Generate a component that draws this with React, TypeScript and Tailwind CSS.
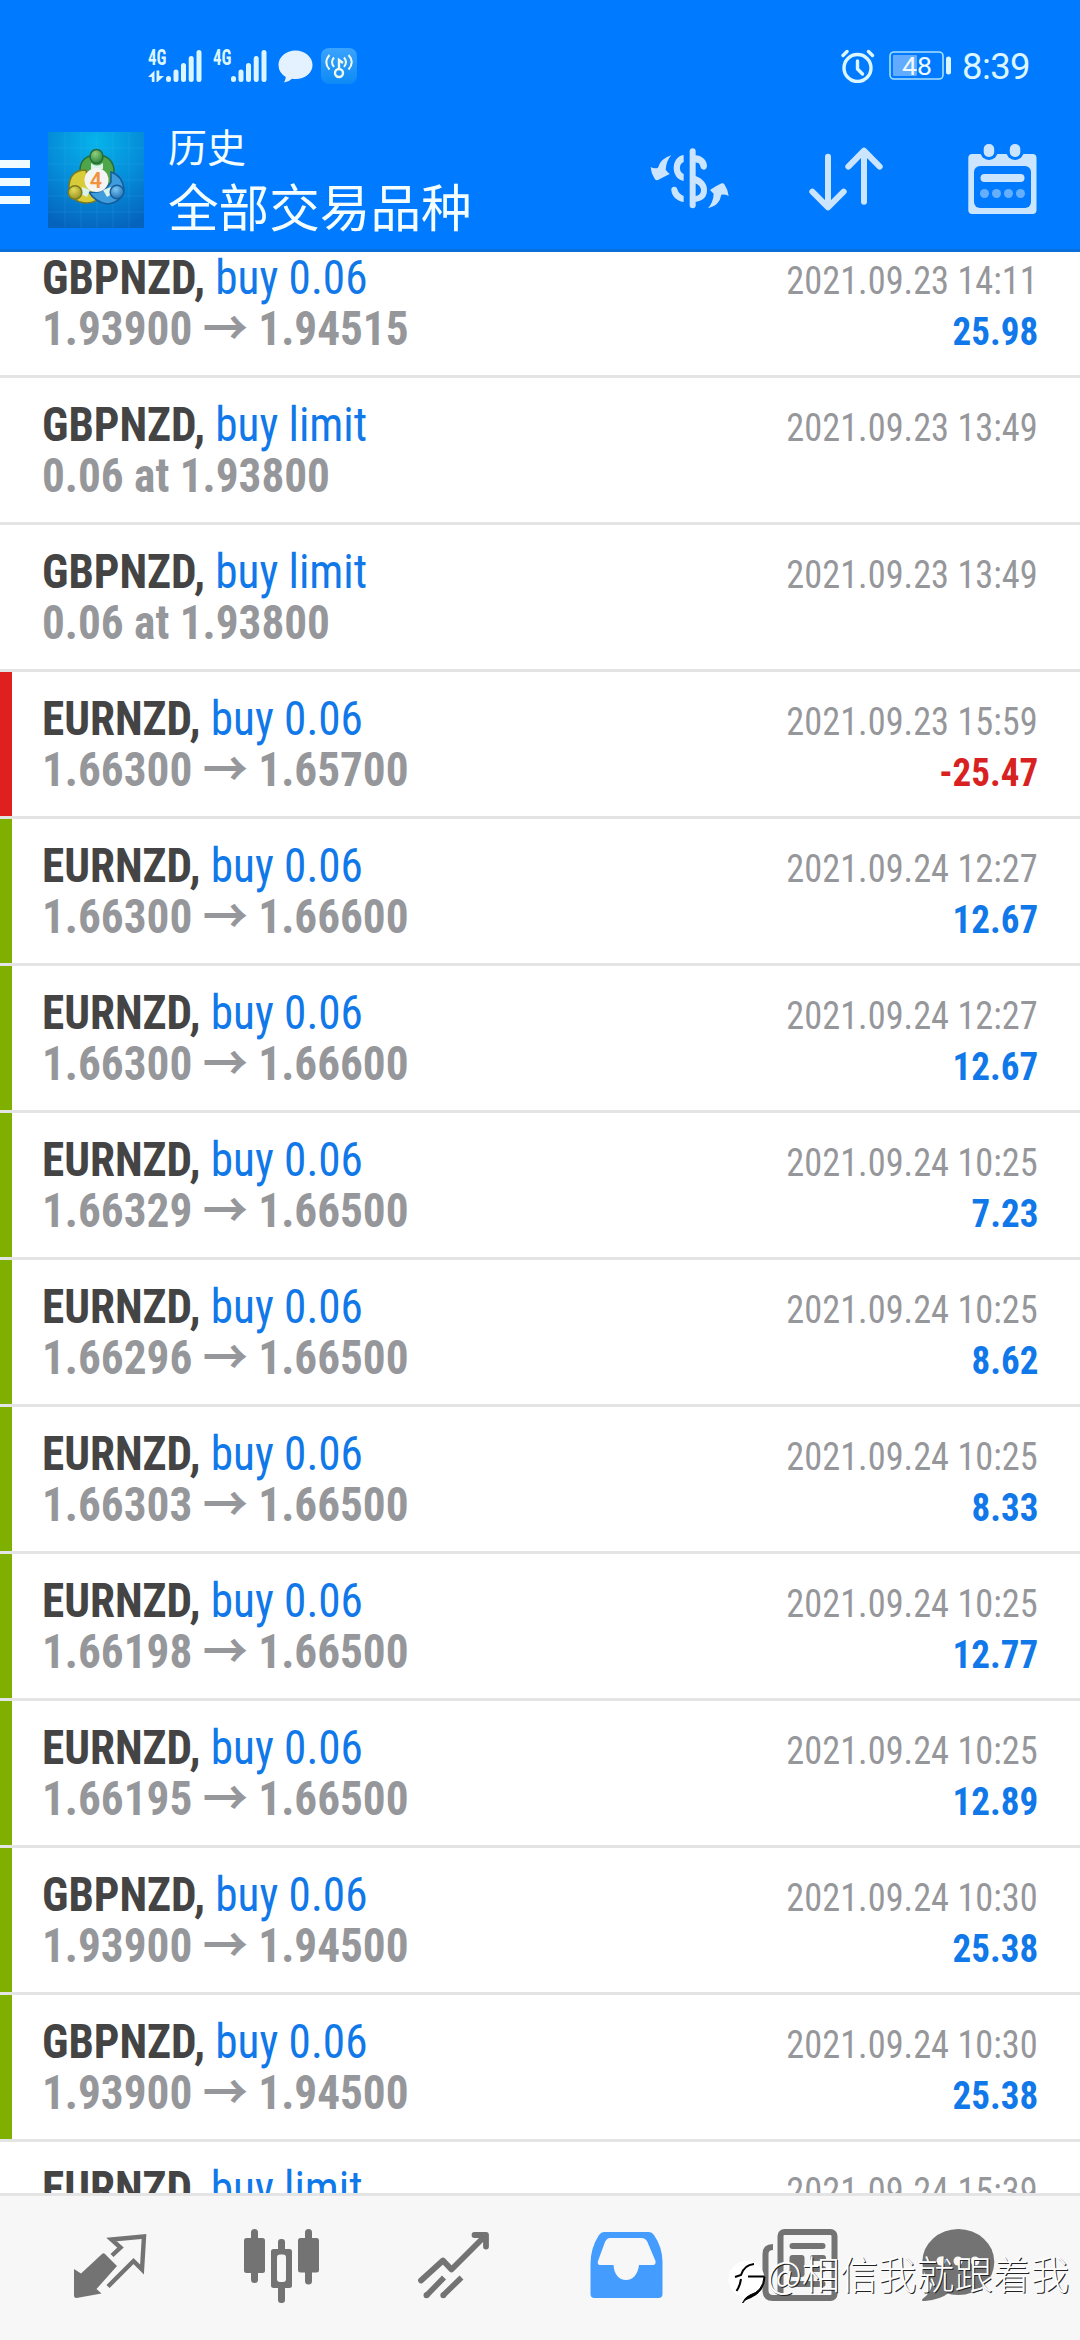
import type React from 'react'

type Deal = {
  symbol: string
  action: string
  open: string
  close?: string
  time: string
  profit?: string
  mark?: 'loss' | 'gain'
}

const deals: Deal[] = [
  {symbol: 'GBPNZD', action: 'buy 0.06', open: '1.93900', close: '1.94515', time: '2021.09.23 14:11', profit: '25.98'},
  {symbol: 'GBPNZD', action: 'buy limit', open: '0.06 at 1.93800', time: '2021.09.23 13:49'},
  {symbol: 'GBPNZD', action: 'buy limit', open: '0.06 at 1.93800', time: '2021.09.23 13:49'},
  {symbol: 'EURNZD', action: 'buy 0.06', open: '1.66300', close: '1.65700', time: '2021.09.23 15:59', profit: '-25.47', mark: 'loss'},
  {symbol: 'EURNZD', action: 'buy 0.06', open: '1.66300', close: '1.66600', time: '2021.09.24 12:27', profit: '12.67', mark: 'gain'},
  {symbol: 'EURNZD', action: 'buy 0.06', open: '1.66300', close: '1.66600', time: '2021.09.24 12:27', profit: '12.67', mark: 'gain'},
  {symbol: 'EURNZD', action: 'buy 0.06', open: '1.66329', close: '1.66500', time: '2021.09.24 10:25', profit: '7.23', mark: 'gain'},
  {symbol: 'EURNZD', action: 'buy 0.06', open: '1.66296', close: '1.66500', time: '2021.09.24 10:25', profit: '8.62', mark: 'gain'},
  {symbol: 'EURNZD', action: 'buy 0.06', open: '1.66303', close: '1.66500', time: '2021.09.24 10:25', profit: '8.33', mark: 'gain'},
  {symbol: 'EURNZD', action: 'buy 0.06', open: '1.66198', close: '1.66500', time: '2021.09.24 10:25', profit: '12.77', mark: 'gain'},
  {symbol: 'EURNZD', action: 'buy 0.06', open: '1.66195', close: '1.66500', time: '2021.09.24 10:25', profit: '12.89', mark: 'gain'},
  {symbol: 'GBPNZD', action: 'buy 0.06', open: '1.93900', close: '1.94500', time: '2021.09.24 10:30', profit: '25.38', mark: 'gain'},
  {symbol: 'GBPNZD', action: 'buy 0.06', open: '1.93900', close: '1.94500', time: '2021.09.24 10:30', profit: '25.38', mark: 'gain'},
  {symbol: 'EURNZD', action: 'buy limit', open: '0.06 at 1.66000', time: '2021.09.24 15:39'}
]

const getMarkColor = (mark?: string) => {
  switch (mark) {
    case 'loss':
      return 'bg-[#e01f1f]'
    case 'gain':
      return 'bg-[#7fb000]'
    default:
      return 'bg-transparent'
  }
}

const View = ({className, children}: {className?: string; children?: React.ReactNode}) => <div className={className}>{children}</div>
const Text = ({className, children}: {className?: string; children?: React.ReactNode}) => <span className={className}>{children}</span>

const Signal = ({data}: {data?: boolean}) => (
  <svg className="h-[34px] w-[54px]" viewBox="0 0 54 34" fill="#dcf6ff">
    <text x="0" y="16" fontSize="21.500" fontWeight="700" textLength="18.500" lengthAdjust="spacingAndGlyphs" className="font-['Roboto_Condensed','Roboto',sans-serif]">
      4G
    </text>
    {data && <path d="M0 28 6.500 21.500V33H3.800V28ZM8.500 21.500H11.300V27H16L9.500 33H8.500Z" />}
    <g stroke="#dcf6ff" strokeWidth="5" strokeLinecap="round">
      <path d="M20.500 29.500v1M28 23v7.500M35.500 16.500v14M43.200 9.500v21M51 3.500v27" />
    </g>
  </svg>
)

const StatusBar = () => (
  <View className="flex h-[132px] items-center pl-[148px] pr-[51px]">
    <Signal data />
    <View className="w-[11px]" />
    <Signal />
    <svg className="ml-[11px] h-[34px] w-[36px]" viewBox="0 0 36 34" fill="#e4f2ff">
      <path d="M17.500 1.500C27 1.500 34.500 8 34.500 16S27 30 17.500 30Q15.500 30 14 29.800Q11 33 6 33.500Q7.500 31 7.800 28Q.5 23.500 .5 16C.5 8 8 1.500 17.500 1.500Z" />
    </svg>
    <svg className="ml-[7px] h-[36px] w-[36px]" viewBox="0 0 36 36">
      <defs>
        <linearGradient id="wifiBg" x1="0" y1="0" x2="0" y2="1">
          <stop offset="0" stopColor="#3aa3ff" />
          <stop offset="1" stopColor="#0d8af6" />
        </linearGradient>
      </defs>
      <rect width="36" height="36" rx="8" fill="url(#wifiBg)" />
      <g fill="none" stroke="#eef9e8" strokeWidth="2">
        <circle cx="18" cy="25" r="4" strokeWidth="2.400" />
        <path d="M18 21V12l4 3" strokeWidth="2.400" />
        <path d="M13 9.500q-4 4.500 0 9.500M8.500 7q-6.500 7 0 14.500M23 9.500q4 4.500 0 9.500M27.500 7q6.500 7 0 14.500" />
      </g>
    </svg>
    <View className="flex-1" />
    <svg className="h-[34px] w-[34px]" viewBox="0 0 34 34" fill="none" stroke="#dcf6ff" strokeLinecap="round" strokeLinejoin="round">
      <circle cx="16.500" cy="19" r="13.500" strokeWidth="3.400" />
      <path d="M16.500 12v8l5 5" strokeWidth="3.400" />
      <path d="M2 6.500 6 2.500M27.500 2.500l4 4" strokeWidth="3.400" />
    </svg>
    <svg className="ml-[14px] h-[30px] w-[64px]" viewBox="0 0 64 30">
      <rect x="1" y="1" width="53" height="27" rx="4" fill="none" stroke="#a6e0ff" strokeWidth="1.600" />
      <rect x="4" y="4" width="24" height="21" rx="1" fill="#62abff" />
      <rect x="57" y="5.500" width="5" height="18" rx="2.500" fill="#dcf6ff" />
      <text x="13" y="24" fontSize="26.500" textLength="30" lengthAdjust="spacingAndGlyphs" fill="#eefaff" className="font-['Roboto',sans-serif]">
        48
      </text>
    </svg>
    <Text className="ml-[9px] mt-[2px] w-[67px] whitespace-nowrap font-['Roboto',sans-serif] text-[36.5px] leading-[52px] tracking-[-0.6px] text-[#dcf6ff]">8:39</Text>
  </View>
)

const AppLogo = () => (
  <svg className="h-[96px] w-[96px]" viewBox="0 0 96 96">
    <defs>
      <radialGradient id="logoBg" cx=".5" cy=".1" r=".95">
        <stop offset="0" stopColor="#06b4ea" />
        <stop offset=".55" stopColor="#058ad8" />
        <stop offset="1" stopColor="#0562bd" />
      </radialGradient>
      <radialGradient id="green" cx=".4" cy=".3" r=".8">
        <stop offset="0" stopColor="#8fd07c" />
        <stop offset="1" stopColor="#1f7a35" />
      </radialGradient>
      <radialGradient id="yellow" cx=".4" cy=".3" r=".8">
        <stop offset="0" stopColor="#e8dc5c" />
        <stop offset="1" stopColor="#8a8a1c" />
      </radialGradient>
      <radialGradient id="blue" cx=".4" cy=".3" r=".8">
        <stop offset="0" stopColor="#7cc6f0" />
        <stop offset="1" stopColor="#1468b0" />
      </radialGradient>
    </defs>
    <rect width="96" height="96" fill="url(#logoBg)" />
    <path d="M17 0V96M33 0V96M49 0V96M65 0V96M81 0V96M0 16H96M0 32H96M0 48H96M0 64H96M0 80H96" stroke="#5fd0ff" strokeOpacity=".14" strokeWidth="1" />
    <g strokeWidth="1.500">
      <path d="M32 41C31 27 40 23 49 23S67 28 66 42Q66 52 62 58L50 44Z" fill="#4fa64a" stroke="#246b38" />
      <path d="M38 38Q22 38 21 54Q22 70 38 71Q50 71 54 62Q44 60 40 50Z" fill="#d8cc38" stroke="#7c7a20" />
      <path d="M63 40Q75 44 76 58Q73 71 59 72Q47 70 41 60Q56 62 63 50Z" fill="#3f9ddd" stroke="#165c9c" />
      <path d="M43 31q6 5 12 0v6H43ZM34 55l8 3-3 7-6-3ZM63 55l-8 3 4 7 5-3Z" fill="#d9f2ea" stroke="none" />
      <ellipse cx="48.500" cy="24.500" rx="6.500" ry="7" fill="url(#green)" stroke="#246b38" />
      <circle cx="27" cy="60.500" r="6.800" fill="url(#yellow)" stroke="#7c7a20" />
      <circle cx="69" cy="60" r="6.800" fill="url(#blue)" stroke="#165c9c" />
    </g>
    <circle cx="48.500" cy="48" r="12" fill="#f4f4f4" />
    <text x="48" y="55.500" textAnchor="middle" fontSize="21.500" fontWeight="600" fill="#f2923c" className="font-['Roboto',sans-serif]">
      4
    </text>
  </svg>
)

const Header = () => (
  <View className="flex h-[120px] border-b-[3px] border-[#0a6edb]">
    <View className="mt-[28px] flex w-[30px] flex-col gap-[10px]">
      <View className="h-[8px] bg-[#f0fbff]" />
      <View className="h-[8px] bg-[#f0fbff]" />
      <View className="h-[8px] bg-[#f0fbff]" />
    </View>
    <View className="ml-[18px]">
      <AppLogo />
    </View>
    <View className="-mt-[11px] ml-[24px] flex flex-1 flex-col font-['Noto_Sans_CJK_SC',sans-serif] text-[#f4feff]">
      <Text className="text-[39px] leading-[48px]">历史</Text>
      <Text className="mt-[6px] text-[50.6px] leading-[60px]">全部交易品种</Text>
    </View>
    <View className="flex pr-[43px] pt-[11px]">
      <svg className="mt-[4px] h-[63px] w-[81px]" viewBox="28 50 243 189" fill="#cce5ff">
        <path d="M33 110Q44 116 55 112Q62 85 95 75Q80 90 78 118Q84 126 90 131Q72 140 55 149Q48 152 44 144Q34 128 33 110Z" />
        <path d="M132 74C92 80 92 145 132 152V131C117 126 117 100 132 95Z" />
        <path d="M95 180a9 9 0 0 1 18-3C115 186 122 193 132 197V215C110 212 97 198 95 180Z" />
        <rect x="150" y="54" width="18" height="180" rx="9" />
        <path d="M166 75C190 76 201 92 202 106q-1 12-10 12q-8 0-10-10C180 100 176 97 166 96Z" />
        <path d="M166 136C190 145 203 160 202 180C202 202 188 213 166 215V198C178 196 184 190 184 180C184 172 178 163 166 159Z" />
        <path d="M205 234Q221 215 222 190Q216 184 211 179Q228 167 246 159Q252 158 255 163Q266 180 267 197Q258 192 245 193Q240 225 205 234Z" />
      </svg>
      <svg className="ml-[79px] mt-[4px] h-[64px] w-[74px]" viewBox="507 52 222 192" fill="none" stroke="#cce5ff" strokeWidth="18" strokeLinecap="round" strokeLinejoin="round">
        <path d="M564 81V231M517 186l47 47 47-47M672 216V65M625 111l47-48 47 48" />
      </svg>
      <svg className="ml-[85px] h-[72px] w-[69px]" viewBox="0 0 69 72">
        <rect x=".3" y="11" width="68.200" height="60" rx="4" fill="#cce5ff" />
        <rect x="6" y="23" width="57" height="42" rx="6" fill="#007aff" />
        <rect x="12" y="-2" width="18" height="19" rx="9" fill="#007aff" />
        <rect x="38" y="-2" width="18" height="19" rx="9" fill="#007aff" />
        <rect x="15.700" y="1" width="10.500" height="13" rx="5" fill="#cce5ff" />
        <rect x="41.800" y="1" width="10.500" height="13" rx="5" fill="#cce5ff" />
        <rect x="12.500" y="31" width="44" height="8" rx="4" fill="#cce5ff" />
        <g fill="#66afff">
          <circle cx="16.500" cy="50.500" r="4.500" />
          <circle cx="28.500" cy="50.500" r="4.500" />
          <circle cx="40.500" cy="50.500" r="4.500" />
          <circle cx="52.500" cy="50.500" r="4.500" />
        </g>
      </svg>
    </View>
  </View>
)

const DealRow = ({deal}: {deal: Deal}) => (
  <View className="flex h-[147px] shrink-0 border-b-[3px] border-[#e4e4e4]">
    <View className={`w-[12px] ${getMarkColor(deal.mark)}`} />
    <View className="flex-1 whitespace-nowrap pl-[30px] pr-[42px] pt-[21px] font-['Roboto_Condensed','Roboto',sans-serif] leading-[51px]">
      <View className="flex h-[51px] items-baseline justify-between">
        <View className="origin-left scale-x-[0.941] text-[48px]">
          <Text className="font-bold text-[#444444]">{deal.symbol},</Text>
          <Text className="text-[#1078e8]"> {deal.action}</Text>
        </View>
        <Text className="origin-right scale-x-[0.932] text-[39px] text-[#96979b]">{deal.time}</Text>
      </View>
      <View className="flex h-[51px] items-baseline justify-between">
        <View className="origin-left scale-x-[0.942] text-[48px] font-bold text-[#96979b]">
          <Text>{deal.open}</Text>
          {deal.close && (
            <>
              <Text className="font-['Roboto_Condensed','Noto_Sans_CJK_SC',sans-serif]"> → </Text>
              <Text>{deal.close}</Text>
            </>
          )}
        </View>
        {deal.profit && (
          <Text className={`origin-right scale-x-[0.95] text-[39px] font-bold ${deal.mark === 'loss' ? 'text-[#d82222]' : 'text-[#1078e8]'}`}>{deal.profit}</Text>
        )}
      </View>
    </View>
  </View>
)

const TabBar = () => (
  <View className="relative grid h-[147px] grid-cols-6 border-t-[3px] border-[#e4e4e4] bg-[#f7f7f7] px-[24px] text-[#737373]">
    <svg className="h-[144px] w-[172px]" viewBox="24 2196 172 144" fill="currentColor">
      <path d="M74 2269 81 2273.500 102 2254q1.500-1.500 3 0L117 2266 96.500 2289 101.500 2293.500 76.500 2298q-2.500 0-2.500-2Z" />
      <path d="M112 2255.500 120.500 2247.500 111.500 2239.500 144 2236.500 142 2269.500 133.500 2261 108 2286.500" fill="none" stroke="currentColor" strokeWidth="4.400" />
    </svg>
    <svg className="h-[144px] w-[172px]" viewBox="196 2196 172 144" fill="currentColor">
      <rect x="251" y="2229" width="7" height="54" rx="3.500" />
      <rect x="244" y="2238" width="21" height="35" rx="2.500" />
      <rect x="278" y="2239" width="7" height="64" rx="3" />
      <rect x="271" y="2249" width="21" height="39" rx="2.500" />
      <rect x="277" y="2254.500" width="9" height="27.500" rx="3" fill="#f7f7f7" />
      <rect x="305" y="2229" width="7" height="55.500" rx="3.500" />
      <rect x="298" y="2238" width="21" height="34.500" rx="2.500" />
    </svg>
    <svg className="h-[144px] w-[172px]" viewBox="368 2196 172 144" fill="none" stroke="currentColor" strokeWidth="6">
      <path d="M421 2280.500 443 2260.500 451.500 2269.500 485 2236M474.500 2235H486V2246.500" strokeLinecap="round" strokeLinejoin="round" strokeWidth="5.800" />
      <path d="M427 2295 444 2277.500M443.500 2295 461.500 2277.500" strokeWidth="5.600" />
      <path d="M426.500 2295.300h.01M443.300 2295.300h.01" strokeLinecap="round" />
    </svg>
    <svg className="h-[144px] w-[172px]" viewBox="540 2196 172 144">
      <path d="M604 2232H649Q652 2232 654 2235Q663 2248 662.500 2264V2294q0 4-4 4H594.500q-4 0-4-4V2264Q590.500 2248 599 2235Q601 2232 604 2232Z" fill="#459cff" />
      <path d="M610 2238H642Q645 2238 647 2241L655.500 2261Q656 2265 653 2265H639C638 2274 633 2280 626 2280S614 2274 613.500 2265H600Q597 2265 598 2261L605 2242Q607 2238 610 2238Z" fill="#f7f7f7" />
    </svg>
    <svg className="h-[144px] w-[172px]" viewBox="712 2196 172 144" fill="none" stroke="currentColor" strokeWidth="6">
      <path d="M773 2247Q765.500 2247 765.500 2254V2291Q766 2298 773 2298H790" />
      <rect x="780.500" y="2232" width="54" height="66" rx="4" fill="#f7f7f7" />
      <path d="M792.500 2246H822.500M813 2258H823M813 2269H823M792.500 2284H822.500" strokeLinecap="round" />
      <rect x="789.500" y="2255" width="15" height="22" rx="3" fill="currentColor" stroke="none" />
    </svg>
    <svg className="h-[144px] w-[172px]" viewBox="884 2196 172 144" fill="currentColor">
      <ellipse cx="958.300" cy="2262" rx="36" ry="33" />
      <path d="M932 2284Q931 2293 922.500 2299Q921 2301.500 925 2301Q940 2300 950 2292Z" />
      <g fill="#f7f7f7">
        <circle cx="941" cy="2261" r="4.500" />
        <circle cx="958" cy="2261" r="4.500" />
        <circle cx="975" cy="2261" r="4.500" />
      </g>
    </svg>
    {/* watermark */}
    <View className="absolute left-[728px] top-[50px] flex items-start">
      <svg className="mt-[14px] h-[44px] w-[39px]" viewBox="728 2260 39 44" fill="none">
        <circle cx="746.500" cy="2279" r="18" fill="#fff" />
        <path d="M756 2290 744 2302 741 2290Z" fill="#fff" />
        <path d="M735 2277 741 2275Q744 2265 754 2264M748 2276.500H764.500" stroke="#000" strokeWidth="2" />
        <path d="M741 2279Q740 2286 736.500 2291" stroke="#000" strokeWidth="2" />
        <path d="M764 2277Q763 2291 750 2295Q745 2297 742.500 2303Q745 2299 751 2297.500Q764 2292 765 2277Z" fill="#000" stroke="#000" />
      </svg>
      <Text className="whitespace-nowrap font-['Noto_Sans_CJK_SC',sans-serif] text-[38.2px] font-light leading-[54px] text-white [text-shadow:1px_1px_0_#222]">@相信我就跟着我</Text>
    </View>
  </View>
)

const App: React.FC = () => {
  return (
    <View className="flex h-[2340px] w-[1080px] flex-col overflow-hidden bg-white">
      <View className="bg-[#007aff]">
        <StatusBar />
        <Header />
      </View>
      <View className="flex flex-1 flex-col overflow-hidden">
        <View className="-mt-[21px]">
          {deals.map((deal, i) => (
            <DealRow key={i} deal={deal} />
          ))}
        </View>
      </View>
      <TabBar />
    </View>
  )
}

export default App
